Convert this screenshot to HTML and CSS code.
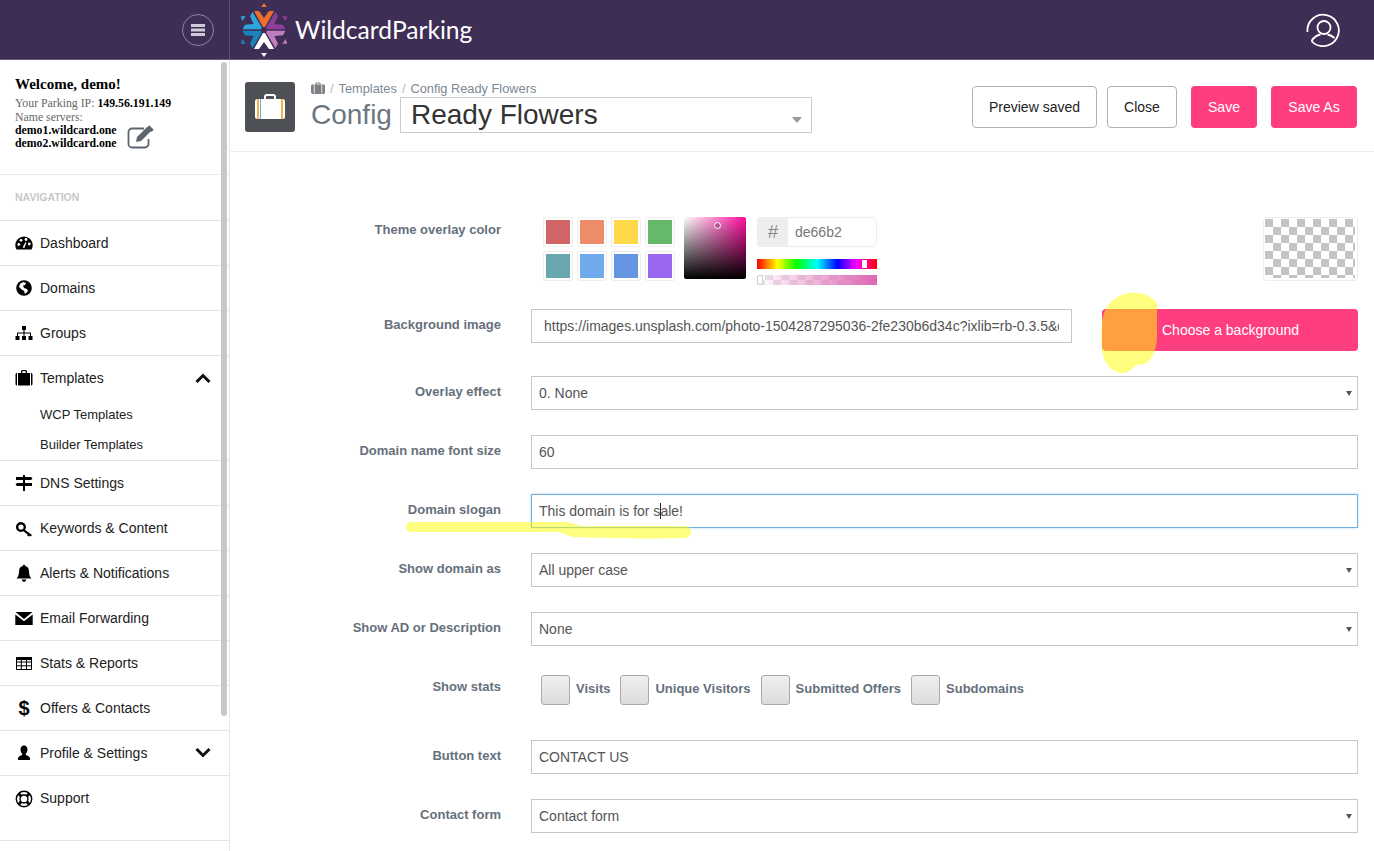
FILE: index.html
```html
<!DOCTYPE html>
<html lang="en">
<head>
  <meta charset="UTF-8">
  <title>WildcardParking - Config Ready Flowers</title>
  <link rel="stylesheet" href="styles.css">
</head>
<body>
  <div class="topbar">
    <div class="topbar-left">
      <button class="menu-btn">
        <svg width="14" height="12" viewBox="0 0 14 12"><path d="M0 0h14v3H0zM0 4.500h14v3H0zM0 9h14v3H0z" fill="#cfc9d8"/></svg>
      </button>
    </div>
    <div class="brand">
      <svg class="brand-logo" width="50" height="54" viewBox="-25 -27 50 54">
        <g><path d="M-10 -19h5l5 7 5-7h5L1 -3h-2z" fill="#ee6f2d"/><path d="M0 -27l3 4h-6z" fill="#ee6f2d"/></g>
        <g transform="rotate(60)"><path d="M-10 -19h5l5 7 5-7h5L1 -3h-2z" fill="#8b3f99"/><path d="M0 -27l3 4h-6z" fill="#8b3f99"/></g>
        <g transform="rotate(120)"><path d="M-10 -19h5l5 7 5-7h5L1 -3h-2z" fill="#c07cbc"/><path d="M0 -27l3 4h-6z" fill="#c07cbc"/></g>
        <g transform="rotate(180)"><path d="M-10 -19h5l5 7 5-7h5L1 -3h-2z" fill="#fff"/><path d="M0 -27l3 4h-6z" fill="#fff"/></g>
        <g transform="rotate(240)"><path d="M-10 -19h5l5 7 5-7h5L1 -3h-2z" fill="#1a83ba"/><path d="M0 -27l3 4h-6z" fill="#1a83ba"/></g>
        <g transform="rotate(300)"><path d="M-10 -19h5l5 7 5-7h5L1 -3h-2z" fill="#2ea6dd"/><path d="M0 -27l3 4h-6z" fill="#2ea6dd"/></g>
      </svg>
      <span class="brand-name">WildcardParking</span>
    </div>
    <svg class="avatar" width="34" height="34" viewBox="0 0 34 34" fill="none" stroke="#fff" stroke-width="1.800">
      <path d="M1.500 19A15.700 15.700 0 1 1 5.500 28"/>
      <circle cx="18" cy="14.500" r="6.500"/>
      <path d="M5.500 28C8 24 11 22 14.500 21.500M21.500 21.500c2.500.5 5 1.700 7 3.500"/>
    </svg>
  </div>

  <div class="layout">
    <aside class="sidebar">
      <div class="scrollthumb"></div>
      <div class="welcome">
        <div class="welcome-title">Welcome, demo!</div>
        <div class="welcome-line">Your Parking IP: <b>149.56.191.149</b></div>
        <div class="welcome-line welcome-line--gap">Name servers:</div>
        <div class="ns-row">
          <div>
            <div class="welcome-line"><b>demo1.wildcard.one</b></div>
            <div class="welcome-line"><b>demo2.wildcard.one</b></div>
          </div>
          <svg class="ns-edit" width="29" height="24" viewBox="0 0 29 24" fill="none">
            <path d="M17 3.500H5a3.500 3.500 0 0 0-3.500 3.500v12A3.500 3.500 0 0 0 5 22.500h13a3.500 3.500 0 0 0 3.500-3.500v-5" stroke="#5c6670" stroke-width="1.800"/>
            <path d="M9 17l1-5L20 2l4 4-10 10z M21.500 1l1-.5 4 4-.5 1-1.500 1.500-4.500-4.500z" fill="#5c6670"/>
          </svg>
        </div>
      </div>
      <div class="nav-label">NAVIGATION</div>
      <nav>
        <a class="nav-item">
          <svg class="nav-icon" viewBox="0 0 18 18"><path d="M9 2.500a8.700 8.700 0 0 0-8.700 8.700c0 1.600.4 3 1.200 4.300h15c.8-1.300 1.200-2.700 1.200-4.300A8.700 8.700 0 0 0 9 2.500z"/><circle cx="3.800" cy="10.500" r="1.400" fill="#fff"/><circle cx="6" cy="6.300" r="1.400" fill="#fff"/><circle cx="11" cy="5.500" r="1.400" fill="#fff"/><circle cx="14.300" cy="10" r="1.400" fill="#fff"/><path d="M7.600 13.500l3-5.500 .8.400-2 5.500z" fill="#fff"/></svg>
          Dashboard
        </a>
        <a class="nav-item">
          <svg class="nav-icon" viewBox="0 0 18 18"><circle cx="9" cy="9" r="7.800"/><path d="M5 5l3-2 3 1-1 2-2 .5L9 9l3 1 1 2-3 3-1-3-3-2-2-2z" fill="#fff"/></svg>
          Domains
        </a>
        <a class="nav-item">
          <svg class="nav-icon" viewBox="0 0 18 18"><path d="M7 2h4v4H9.600v2.500H16V12h1.500v4h-4v-4H15V9.500H9.500V12H11v4H7v-4h1.500V9.500H3V12h1.500v4h-4v-4H2V8.500h6.400V6H7z"/></svg>
          Groups
        </a>
        <div class="nav-group">
          <a class="nav-item nav-item--open">
            <svg class="nav-icon" viewBox="0 0 18 18"><path d="M6 4V2.500C6 1.700 6.700 1 7.500 1h3c.8 0 1.500.7 1.500 1.500V4h3v12.500H3V4zm1.300 0h3.400V2.300H7.300zM.5 5.500C.5 4.700 1.200 4 2 4v12.500c-.8 0-1.500-.7-1.500-1.500zM16 4c.8 0 1.500.7 1.500 1.500V15c0 .8-.7 1.500-1.500 1.500z"/></svg>
            Templates
            <svg class="nav-caret" width="16" height="10" viewBox="0 0 16 10"><path d="M1.500 9L8 2.500 14.500 9" fill="none" stroke="#111" stroke-width="3"/></svg>
          </a>
          <a class="nav-sub">WCP Templates</a>
          <a class="nav-sub">Builder Templates</a>
        </div>
        <a class="nav-item">
          <svg class="nav-icon" viewBox="0 0 18 18"><path d="M8 1h2v2h6l1.500 1.500L16 6h-6v3h7v3h-7v5H8v-5H2L.5 10.500 2 9h6V6H1V3h7z"/></svg>
          DNS Settings
        </a>
        <a class="nav-item">
          <svg class="nav-icon" viewBox="0 0 18 18"><path d="M6 3a5 5 0 1 1-.1 10A5 5 0 0 1 6 3zm0 2.400a2.600 2.600 0 1 0 0 5.200 2.600 2.600 0 0 0 0-5.200z" fill-rule="evenodd"/><path d="M9.500 10.500l7.500 5.500-1.500 1.500-1.300-.8-.7.800-1.200-1 .3-1-4.500-3.500z"/></svg>
          Keywords &amp; Content
        </a>
        <a class="nav-item">
          <svg class="nav-icon" viewBox="0 0 18 18"><path d="M9 .8c.7 0 1.200.5 1.200 1.200 2.800.6 3.800 3 3.800 5.500 0 3.500 1 5.500 2.500 7H1.500C3 13 4 11 4 7.500 4 5 5 2.600 7.800 2c0-.7.500-1.200 1.200-1.200zM6.800 15.500h4.400a2.200 2.200 0 0 1-4.400 0z"/></svg>
          Alerts &amp; Notifications
        </a>
        <a class="nav-item">
          <svg class="nav-icon" viewBox="0 0 18 18"><path d="M.5 3h17L9 10zM.3 5.500L9 12.200l8.700-6.700V16H.3z"/></svg>
          Email Forwarding
        </a>
        <a class="nav-item">
          <svg class="nav-icon" viewBox="0 0 18 18"><path d="M1 3h16v3H1z"/><path d="M1.500 3.500h15v12h-15zM6.300 3.500v12M11.500 3.500v12M1.500 8h15M1.500 11.800h15" fill="none" stroke="#000"/></svg>
          Stats &amp; Reports
        </a>
        <a class="nav-item">
          <span class="nav-icon nav-icon--text">$</span>
          Offers &amp; Contacts
        </a>
        <a class="nav-item">
          <svg class="nav-icon" viewBox="0 0 18 18"><path d="M9 1.500c2.400 0 3.500 1.900 3.500 4 0 1.800-.8 3.300-1.700 4.200v1.300c1.800.8 4.200 1.400 4.200 3.500V16H3v-1.500c0-2.100 2.400-2.700 4.200-3.500V9.700C6.300 8.800 5.500 7.300 5.500 5.500c0-2.100 1.100-4 3.500-4z"/></svg>
          Profile &amp; Settings
          <svg class="nav-caret" width="16" height="10" viewBox="0 0 16 10"><path d="M1.500 1L8 7.500 14.500 1" fill="none" stroke="#111" stroke-width="3"/></svg>
        </a>
        <a class="nav-item nav-item--last">
          <svg class="nav-icon" viewBox="0 0 18 18"><g fill="none" stroke="#000"><circle cx="9" cy="9" r="7.700" stroke-width="1.400"/><circle cx="9" cy="9" r="4" stroke-width="1.400"/><path d="M3.500 3.500l3 3M14.500 3.500l-3 3M3.500 14.500l3-3M14.500 14.500l-3-3" stroke-width="3"/></g></svg>
          Support
        </a>
      </nav>
    </aside>

    <main class="content">
      <div class="page-head">
        <div class="page-icon">
          <svg width="32" height="28" viewBox="0 0 32 28">
            <path d="M11 7V4C11 3 12 2 13 2h6c1 0 2 1 2 2v3" fill="none" stroke="#fff" stroke-width="2"/>
            <rect x="1" y="6" width="30" height="20" rx="2.500" fill="#fff"/>
            <path d="M3 6h2v20H3zM27 6h2v20h-2z" fill="#f0b44a"/>
            <path d="M6 6h1v20H6z" fill="#6ba6d8"/>
          </svg>
        </div>
        <div class="page-title">
          <div class="crumbs">
            <svg width="14" height="12" viewBox="0 0 14 12"><path fill-rule="evenodd" d="M4.500 2.500V1.300c0-.4.300-.8.800-.8h3.400c.5 0 .8.400.8.800v1.200h3c.8 0 1.500.7 1.500 1.500v6.500c0 .8-.7 1.500-1.500 1.500h-11C.7 11.500 0 10.800 0 10V4c0-.8.700-1.500 1.500-1.500zM5.500 2.500h3v-1h-3z" fill="#7c7f83"/><path d="M2.800 2.500h.8v9h-.8zM10.400 2.500h.8v9h-.8z" fill="#fff"/></svg>
            <span class="crumb-sep">/</span>
            <span>Templates</span>
            <span class="crumb-sep">/</span>
            <span>Config Ready Flowers</span>
          </div>
          <div class="title-row">
            <h1>Config</h1>
            <div class="select-wrap select-wrap--big">
              <select class="title-select"><option>Ready Flowers</option></select>
            </div>
          </div>
        </div>
        <div class="head-actions">
          <button class="btn btn-preview">Preview saved</button>
          <button class="btn btn-close">Close</button>
          <button class="btn btn-pink btn-save">Save</button>
          <button class="btn btn-pink btn-saveas">Save As</button>
        </div>
      </div>

      <form class="form">
        <div class="row row--theme">
          <label>Theme overlay color</label>
          <div class="control picker">
            <div class="swatches">
              <span class="swatch swatch-1"></span>
              <span class="swatch swatch-2"></span>
              <span class="swatch swatch-3"></span>
              <span class="swatch swatch-4"></span>
              <span class="swatch swatch-5"></span>
              <span class="swatch swatch-6"></span>
              <span class="swatch swatch-7"></span>
              <span class="swatch swatch-8"></span>
            </div>
            <div class="sv-box"><span class="sv-handle"></span></div>
            <div class="hex-col">
              <div class="hex-field"><span class="hex-hash">#</span><span class="hex-value">de66b2</span></div>
              <div class="hue-bar"><span class="hue-handle"></span></div>
              <div class="alpha-bar"><span class="alpha-handle"></span></div>
            </div>
            <div class="preview-box"><div class="preview-checks"></div></div>
          </div>
        </div>

        <div class="row row--bg">
          <label>Background image</label>
          <div class="control bg-control">
            <input class="input input--url" value="https://images.unsplash.com/photo-1504287295036-2fe230b6d34c?ixlib=rb-0.3.5&amp;q=80&amp;fm=jpg">
            <button type="button" class="choose-btn">Choose a background</button>
          </div>
        </div>

        <div class="row">
          <label>Overlay effect</label>
          <div class="control select-wrap"><select class="input"><option>0. None</option></select></div>
        </div>

        <div class="row">
          <label>Domain name font size</label>
          <div class="control"><input class="input" value="60"></div>
        </div>

        <div class="row">
          <label>Domain slogan</label>
          <div class="control"><div class="input input--focus">This domain is for s<span class="caret"></span>ale!</div></div>
        </div>

        <div class="row">
          <label>Show domain as</label>
          <div class="control select-wrap"><select class="input"><option>All upper case</option></select></div>
        </div>

        <div class="row">
          <label>Show AD or Description</label>
          <div class="control select-wrap"><select class="input"><option>None</option></select></div>
        </div>

        <div class="row row--stats">
          <label>Show stats</label>
          <div class="control checks">
            <span class="check"><i></i>Visits</span>
            <span class="check"><i></i>Unique Visitors</span>
            <span class="check"><i></i>Submitted Offers</span>
            <span class="check"><i></i>Subdomains</span>
          </div>
        </div>

        <div class="row">
          <label>Button text</label>
          <div class="control"><input class="input" value="CONTACT US"></div>
        </div>

        <div class="row">
          <label>Contact form</label>
          <div class="control select-wrap"><select class="input"><option>Contact form</option></select></div>
        </div>
      </form>
    </main>
  </div>

  <!-- marker strokes somebody drew on the screenshot -->
  <svg class="marker" width="1374" height="851" viewBox="0 0 1374 851">
    <path d="M1128 293c10-1 20 1 24 6 4 1 6 5 5 10v30c-1 8-2 13-5 18-2 5-8 8-16 8-3 3-8 8-13 8-9 0-17-7-20-18-2-8-2-20-1-34 2-11 8-24 26-28z"/>
    <path d="M411 522h150c8 0 14 2 20 4h104c4 0 6 3 6 6s-2 6-6 6c-40 1-90 0-112-1-8-2-10-5-18-5H411c-3 0-5-2-5-5s2-5 5-5z"/>
  </svg>
</body>
</html>
```

FILE: styles.css
```css
* { box-sizing: border-box; }
html, body { margin: 0; height: 851px; overflow: hidden; }
body { font-family: "Liberation Sans", Arial, sans-serif; font-size: 14px; color: #222; background: #fff; }

.topbar { display: flex; align-items: center; height: 60px; background: #3e2e55; border-bottom: 1px solid #6a5d7d; }
.topbar-left { display: flex; justify-content: flex-end; align-items: center; width: 230px; height: 59px; padding-right: 15px; border-right: 1px solid #5d4f72; }
.menu-btn { display: flex; align-items: center; justify-content: center; width: 32px; height: 32px; padding: 0; background: none; border: 1px solid #8d83a0; border-radius: 50%; }
.brand { display: flex; align-items: center; gap: 6px; padding-left: 9px; }
.brand-logo { display: block; }
.brand-name { font-family: Lato, sans-serif; font-size: 24.600px; font-weight: 400; color: #fff; }
.avatar { margin-left: auto; margin-right: 34px; }

.layout { display: flex; height: 791px; }

.sidebar { position: relative; flex: none; width: 230px; border-right: 1px solid #e6e6e6; }
.scrollthumb { position: absolute; left: 221px; top: 2px; width: 6px; height: 654px; background: #c8c8c8; border-radius: 3px; }
.welcome { height: 115px; padding: 16px 0 0 15px; border-bottom: 1px solid #ececec; font-family: "Liberation Serif", serif; }
.welcome-title { font-size: 15px; font-weight: bold; line-height: 16px; color: #000; margin-bottom: 5px; }
.welcome-line { font-size: 11.800px; line-height: 13px; color: #666; }
.welcome-line--gap { margin-top: 1px; }
.welcome-line b { color: #000; }
.ns-row { display: flex; align-items: center; gap: 10px; }
.ns-edit { margin-top: -1px; }
.nav-label { height: 45px; padding-left: 15px; font-size: 10.500px; font-weight: bold; line-height: 45px; color: #c8c8c8; }

.nav-item { display: flex; align-items: center; height: 45px; padding: 0 18px 0 15px; border-top: 1px solid #e4e4e4; color: #222; }
.nav-item--last { align-items: flex-start; height: 66px; padding-top: 14px; border-bottom: 1px solid #e4e4e4; }
.nav-icon { display: block; flex: none; width: 18px; height: 18px; margin-right: 7px; fill: #000; }
.nav-icon--text { font-size: 20px; font-weight: bold; line-height: 18px; text-align: center; color: #000; }
.nav-caret { margin-left: auto; }
.nav-group { height: 105px; }
.nav-sub { display: block; height: 30px; padding-left: 40px; font-size: 13px; line-height: 30px; }

.content { flex: 1; min-width: 0; }
.page-head { display: flex; height: 92px; padding: 22px 17px 0 15px; border-bottom: 1px solid #eee; }
.page-icon { display: flex; align-items: center; justify-content: center; flex: none; width: 50px; height: 50px; background: #4d5054; border-radius: 3px; }
.page-title { margin-left: 16px; margin-top: -2px; }
.crumbs { display: flex; align-items: center; gap: 4px; height: 16px; font-size: 12.800px; color: #7c8894; }
.crumb-sep { color: #b5bac0; margin: 0 1px; }
.title-row { display: flex; align-items: center; gap: 8px; margin-top: 1px; }
h1 { margin: 0; font-size: 28px; font-weight: normal; color: #6c7680; }

.select-wrap { position: relative; }
.select-wrap::after { content: ""; position: absolute; right: 6px; top: 15px; border-style: solid; border-width: 5px 3.500px 0; border-color: #555 transparent transparent; pointer-events: none; }
select { appearance: none; -webkit-appearance: none; background: #fff; font-family: inherit; }
.select-wrap--big { width: 412px; height: 36px; }
.select-wrap--big::after { right: 10px; top: 20px; border-width: 6px 5px 0; border-color: #999 transparent transparent; }
.title-select { width: 100%; height: 36px; padding: 0 10px 2px; border: 1px solid #ccc; border-radius: 0; font-size: 28px; color: #333; }

.head-actions { display: flex; margin-left: auto; padding-top: 4px; }
.btn { height: 42px; padding: 0; background: #fff; border: 1px solid #b0b0b0; border-radius: 4px; font-family: inherit; font-size: 14px; color: #222; }
.btn-preview { width: 125px; }
.btn-close { width: 70px; margin-left: 10px; }
.btn-pink { background: #ff3e80; border: 0; color: #fff; margin-left: 14px; }
.btn-save { width: 66px; }
.btn-saveas { width: 86px; }

.form { padding-top: 65px; }
.row { display: flex; margin-bottom: 25px; }
.row > label { flex: none; width: 271px; padding-top: 8px; font-size: 13px; font-weight: bold; line-height: 16px; text-align: right; color: #66707c; }
.control { flex: 1; min-width: 0; margin: 0 16px 0 30px; }
.input { display: block; width: 100%; height: 34px; padding: 0 7px; border: 1px solid #c6c6c6; border-radius: 0; font-family: inherit; font-size: 14px; line-height: 32px; color: #555; background: #fff; outline: 0; }
.input--focus { border-color: #6fb1e4; box-shadow: 0 0 2px rgba(102, 175, 233, .5); white-space: nowrap; }
.caret { display: inline-block; width: 1px; height: 16px; margin-right: -1px; vertical-align: -3px; background: #222; }

.row--theme { height: 67px; }
.row--theme > label { padding-top: 5px; }
.picker { position: relative; display: flex; padding-left: 12px; }
.swatches { display: grid; grid-template-columns: repeat(4, 30px); grid-auto-rows: 30px; gap: 4px; width: 132px; height: 64px; }
.swatch { border: 1px solid #eee; border-radius: 2px; background-clip: content-box; padding: 2px; }
.swatch-1 { background-color: #d26565; }
.swatch-2 { background-color: #ea8d68; }
.swatch-3 { background-color: #ffd94a; }
.swatch-4 { background-color: #65b96b; }
.swatch-5 { background-color: #68a7ae; }
.swatch-6 { background-color: #70a9ec; }
.swatch-7 { background-color: #6594e1; }
.swatch-8 { background-color: #9a68f0; }
.sv-box { position: relative; width: 62px; height: 62px; margin-left: 9px; border-radius: 2px; background: linear-gradient(to bottom, transparent, #000), linear-gradient(to right, #fff, #ff0d9f); }
.sv-handle { position: absolute; left: 30px; top: 5px; width: 7px; height: 7px; border: 1.500px solid #fff; border-radius: 50%; background: #b0568f; }
.hex-col { width: 120px; margin-left: 11px; }
.hex-field { display: flex; height: 30px; border: 1px solid #eee; border-radius: 4px; font-size: 14px; line-height: 28px; color: #777; }
.hex-hash { width: 30px; background: #eee; text-align: center; font-size: 19px; color: #888; }
.hex-value { padding-left: 7px; }
.hue-bar { position: relative; height: 10px; margin-top: 12px; background: linear-gradient(to right, #f00 0%, #ff0 17%, #0f0 33%, #0ff 50%, #00f 67%, #f0f 83%, #f00 100%); }
.hue-handle { position: absolute; left: 105px; top: 1px; width: 5px; height: 8px; background: #fff; }
.alpha-bar { position: relative; height: 10px; margin-top: 6px; background: linear-gradient(to right, rgba(222, 102, 178, 0), #de66b2), repeating-conic-gradient(#e8e8e8 0 25%, #fff 0 50%) 0 0 / 16px 10px; }
.alpha-handle { position: absolute; left: 0; top: 0; width: 6px; height: 10px; background: #fff; border: 1px solid #ccc; border-radius: 2px; }
.preview-box { width: 95px; height: 64px; margin-left: auto; padding: 1px 2px 2px 1px; border: 1px solid #eee; border-radius: 3px; }
.preview-checks { height: 100%; background: repeating-conic-gradient(#c4c4c4 0 25%, #fff 0 50%) 8px 0 / 16px 16px; }

.bg-control { display: flex; align-items: flex-start; justify-content: space-between; }
.input--url { width: 541px; padding: 0 12px; }
.choose-btn { width: 256px; height: 42px; padding-left: 60px; background: #ff3e80; border: 0; border-radius: 4px; font-family: inherit; font-size: 14px; color: #fff; text-align: left; }

.row--stats { height: 44px; }
.checks { display: flex; align-items: flex-start; padding: 4px 0 0 10px; }
.check { display: flex; align-items: flex-start; margin-right: 10px; font-size: 13px; font-weight: bold; line-height: 27px; color: #66707c; }
.check i { display: block; width: 29px; height: 30px; margin-right: 6px; background: linear-gradient(to bottom, #efefef, #dcdcdc); border: 1px solid #aaa; border-radius: 3px; }

.marker { position: absolute; left: 0; top: 0; pointer-events: none; }
.marker path { fill: rgba(255, 255, 0, .5); }
```
